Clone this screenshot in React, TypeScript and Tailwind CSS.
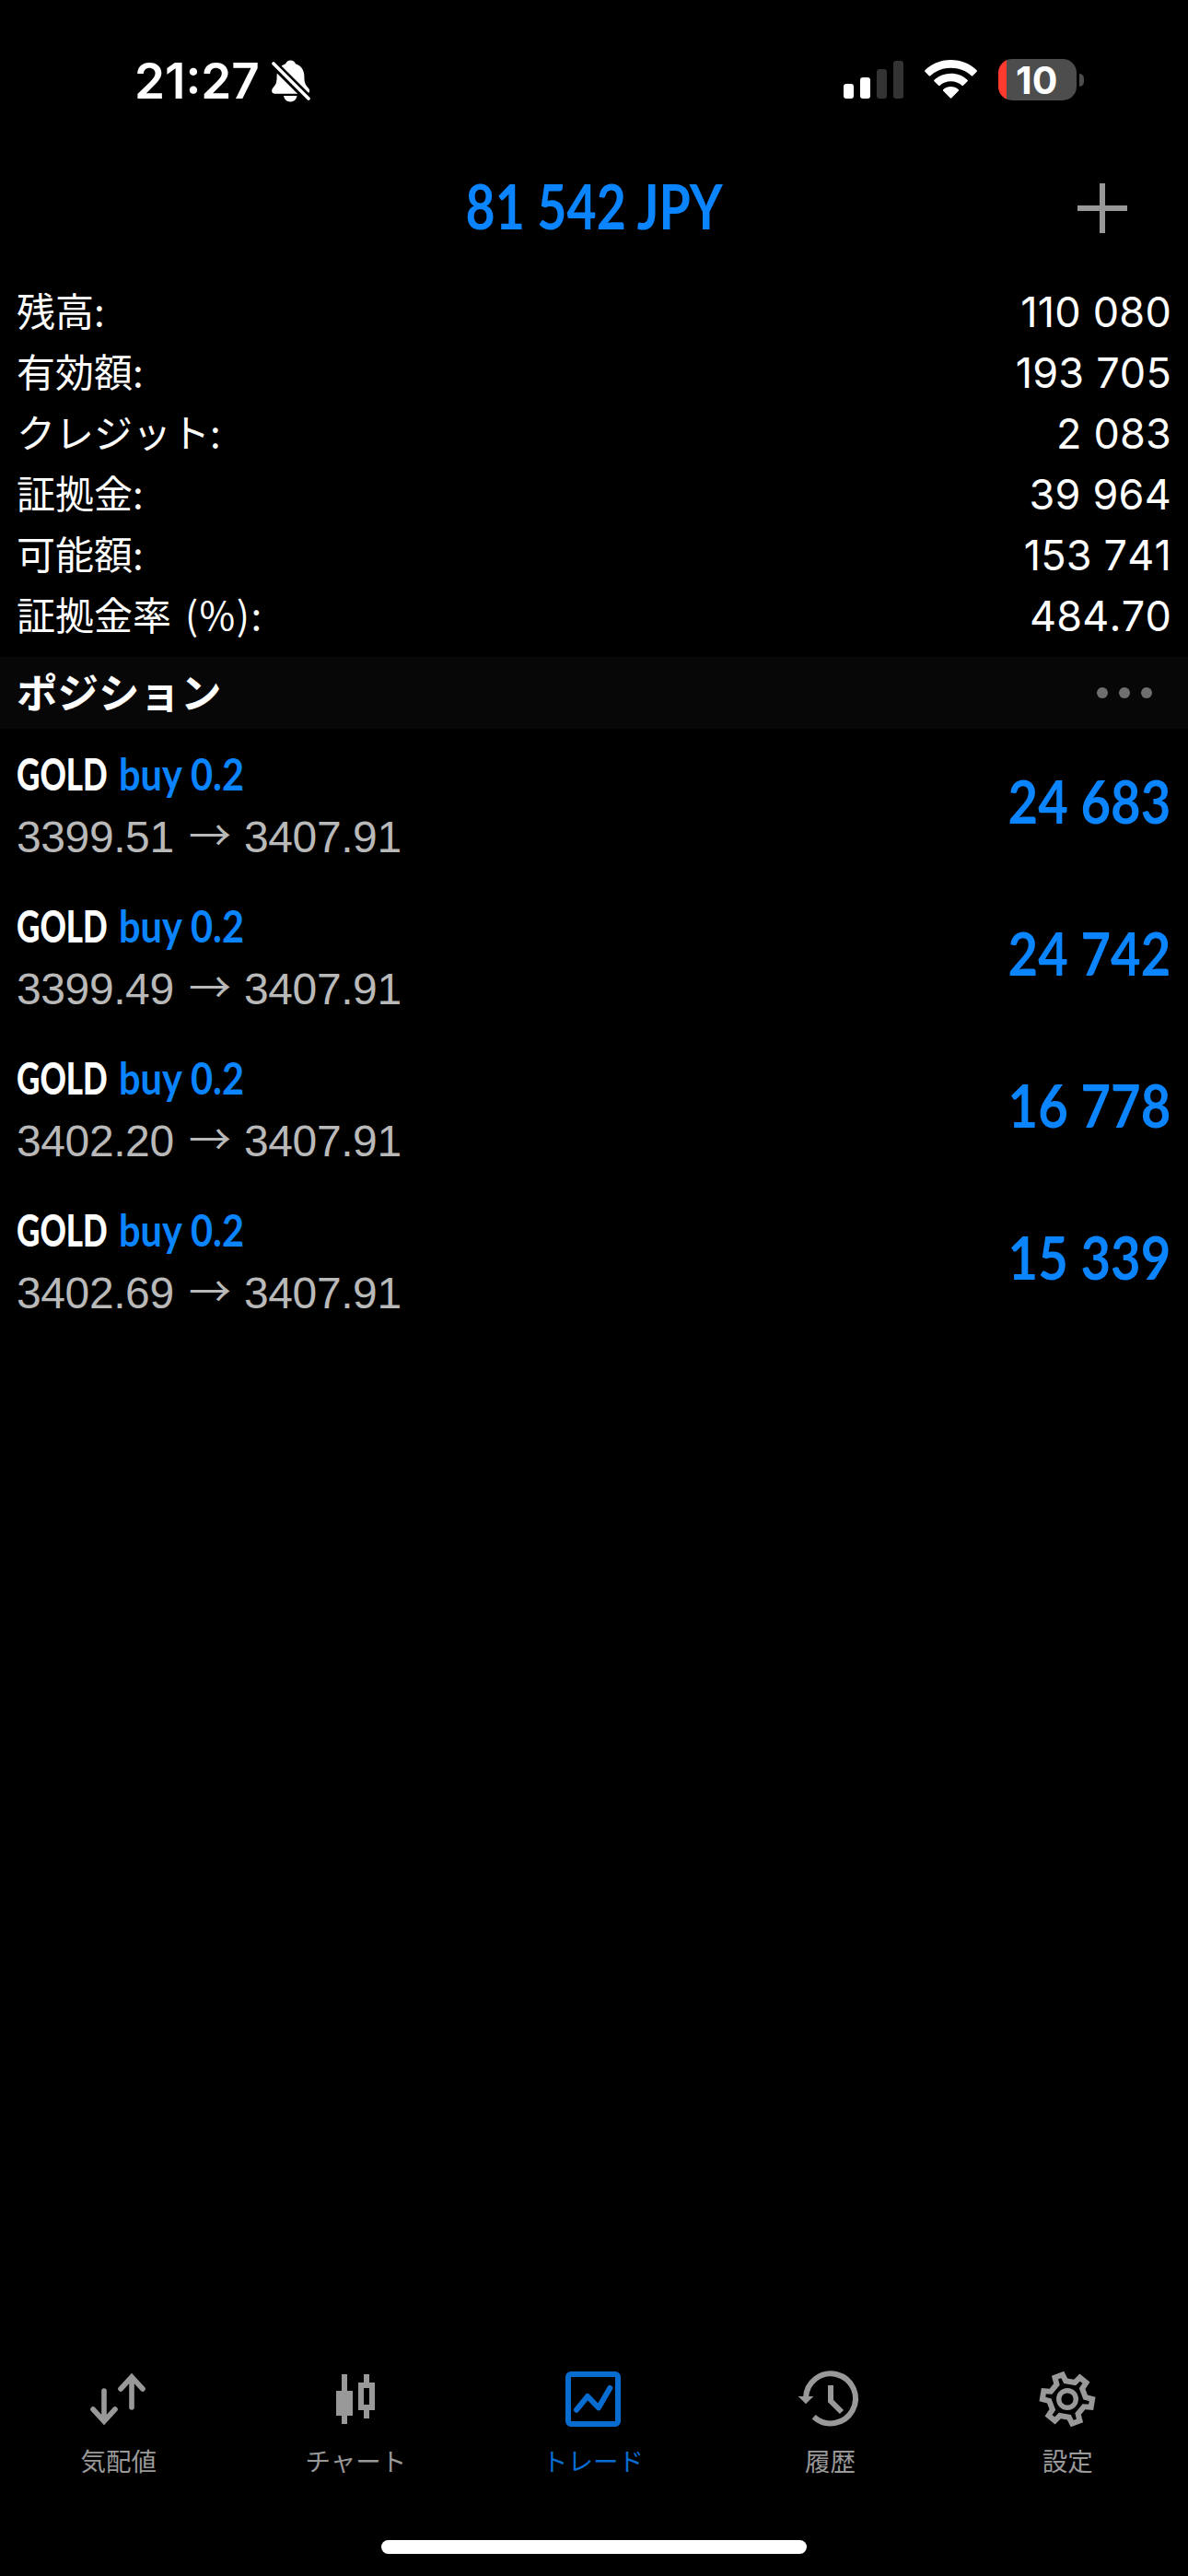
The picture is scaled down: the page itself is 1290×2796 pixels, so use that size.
import type { ReactNode } from "react";

interface Position {
  symbol: string;
  side: string;
  open: string;
  current: string;
  profit: string;
}

const summary = [
  { label: "残高:", value: "110 080" },
  { label: "有効額:", value: "193 705" },
  { label: "クレジット:", value: "2 083" },
  { label: "証拠金:", value: "39 964" },
  { label: "可能額:", value: "153 741" },
  { label: "証拠金率", unit: " (%):", value: "484.70" },
];

const positions: Position[] = [
  { symbol: "GOLD", side: "buy 0.2", open: "3399.51", current: "3407.91", profit: "24 683" },
  { symbol: "GOLD", side: "buy 0.2", open: "3399.49", current: "3407.91", profit: "24 742" },
  { symbol: "GOLD", side: "buy 0.2", open: "3402.20", current: "3407.91", profit: "16 778" },
  { symbol: "GOLD", side: "buy 0.2", open: "3402.69", current: "3407.91", profit: "15 339" },
];

// six-toothed cog, outer corners at r=30.6 and valleys at r=22.4
function gearPath() {
  const points: string[] = [];
  for (let i = 0; i < 6; i++) {
    const mid = 9.5 + i * 60;
    for (const [offset, r] of [[-21, 22.4], [-13.5, 30.6], [13.5, 30.6], [21, 22.4]]) {
      const a = ((mid + offset) * Math.PI) / 180;
      points.push(`${(30 + r * Math.cos(a)).toFixed(2)} ${(30 + r * Math.sin(a)).toFixed(2)}`);
    }
  }
  return `M${points.join("L")}Z`;
}

function TabIcon({ children }: { children: ReactNode }) {
  return (
    <svg
      viewBox="0 0 60 60"
      className="h-[60px] w-[60px] overflow-visible"
      fill="none"
      stroke="currentColor"
      strokeWidth="6"
    >
      {children}
    </svg>
  );
}

const tabs = [
  {
    label: "気配値",
    icon: (
      <TabIcon>
        <path
          d="M14 21v32M2 41l12 13.2L26 41M44 39V7M32 19L44 5.8 56 19"
          strokeLinecap="round"
          strokeWidth="5.6"
        />
      </TabIcon>
    ),
  },
  {
    label: "チャート",
    icon: (
      <TabIcon>
        <path
          stroke="none"
          fill="currentColor"
          fillRule="evenodd"
          d="M15 3h6v18h6v27h-6v9h-6v-9H9V21h6zM39 3h6v9h6v30h-6v9h-6v-9h-6V12h6zM39 18v18h6V18z"
        />
      </TabIcon>
    ),
  },
  {
    label: "トレード",
    active: true,
    icon: (
      <TabIcon>
        <rect x="3" y="3" width="54" height="54" rx="3" />
        <path d="M12 41.7L24 27l12 12.3L48.3 18" strokeLinecap="round" strokeLinejoin="round" />
      </TabIcon>
    ),
  },
  {
    label: "履歴",
    icon: (
      <TabIcon>
        <path d="M3 29A27 27 0 1 1 11.7 49.2" />
        <path d="M30 15v17l12 12" />
        <path d="M-5.3 27h16.6L3 35.3z" fill="currentColor" stroke="none" />
      </TabIcon>
    ),
  },
  {
    label: "設定",
    icon: (
      <TabIcon>
        <clipPath id="gear">
          <path d={gearPath()} />
        </clipPath>
        <path d={gearPath()} clipPath="url(#gear)" strokeWidth="12" />
        <circle cx="30" cy="30" r="9.3" strokeWidth="5.4" />
      </TabIcon>
    ),
  },
];

function StatusBar() {
  return (
    <div className="flex h-[150px] items-start pt-[60px] text-white">
      <div className="ml-[146px] h-[54px] w-[149px] font-['Inter',sans-serif] text-[53px] leading-[56px] font-semibold">
        21:27
      </div>
      <svg viewBox="0 0 42 46" className="mt-[5px] h-[46px] w-[42px]">
        <path
          d="M20.5 .5c-2.7 0-4.5 1.5-5.4 3.8-6 2-9.5 7-9.5 13.5 0 8-1.5 9.5-4.5 13-1.6 2-1.3 5.9 1.9 5.9h35c3.2 0 4-3.9 2-5.9-3.5-3.8-4.6-6-4.6-13 0-6.5-3.3-11.5-9.4-13.5-.9-2.3-2.8-3.8-5.5-3.8zM13 39h14.5c-.5 3.7-3.5 6.5-7.2 6.5S13.500 42.7 13 39z"
          fill="currentColor"
        />
        <path d="M2 4.5L40 42.2" stroke="#000" strokeWidth="9" />
        <path d="M2 4L40 42" stroke="currentColor" strokeWidth="3.6" strokeLinecap="round" />
      </svg>
      <div className="mt-[6px] ml-auto flex h-[41px] items-end gap-[7px]">
        <span className="h-[16px] w-[11px] rounded-[3px] bg-white" />
        <span className="h-[23px] w-[11px] rounded-[3px] bg-white" />
        <span className="h-[32px] w-[11px] rounded-[3px] bg-[#333]" />
        <span className="h-[41px] w-[11px] rounded-[3px] bg-[#333]" />
      </div>
      <svg viewBox="0 0 57 42" className="mt-[5px] ml-[23px] h-[42px] w-[57px]" fill="currentColor">
        <path d="M28.5 0C39.5 0 49.5 4.2 56.6 11.2q.8.8 0 1.6L52.3 17.2q-.8.8-1.6 0C45 11.8 37.2 8.8 28.5 8.8S12 11.8 6.3 17.2q-.8.8-1.6 0L.4 12.8q-.8-.8 0-1.6C7.5 4.2 17.5 0 28.5 0z" />
        <path d="M28.5 14.7c7 0 13.3 2.6 18 7q.8.8 0 1.6L42 27.7q-.8.8-1.6 0c-3.2-2.8-7.3-4.5-11.9-4.5s-8.7 1.7-11.9 4.5q-.8.8-1.6 0l-4.5-4.4q-.8-.8 0-1.6c4.7-4.4 11-7 18-7z" />
        <path d="M28.5 29c3.2 0 6 1.2 8.2 3.1q.8.8 0 1.6l-7.4 7.6q-.8.8-1.6 0l-7.4-7.6q-.8-.8 0-1.6c2.2-1.9 5-3.1 8.2-3.1z" />
      </svg>
      <div className="mt-[4px] mr-[113px] ml-[23px] flex items-center gap-[3px]">
        <div className="flex h-[45px] w-[85px] rounded-[15px] bg-linear-to-r from-[#ff3b30] from-[9px] to-[#4d4d4d] to-[9px]">
          <span className="pl-[19px] font-['Inter',sans-serif] text-[41px] leading-[46px] font-bold">10</span>
        </div>
        <span className="h-[14px] w-[5px] rounded-r-full bg-[#4d4d4d]" />
      </div>
    </div>
  );
}

function PositionRow({ symbol, side, open, current, profit }: Position) {
  return (
    <div className="flex h-[165px] items-start justify-between pr-[19px] pl-[18px]">
      <div className="pt-[18px]">
        <div className="flex h-[62px] font-['Lato',sans-serif] text-[48px] leading-[62px] font-bold whitespace-pre text-white">
          <span className="w-[111px] origin-left scale-x-[0.73] font-black">{symbol}</span>
          <span className="origin-left scale-x-[0.865] text-[#0a84ff]">{side}</span>
        </div>
        <div className="flex h-[74px] font-['Liberation_Sans',sans-serif] text-[48px] leading-[75px] tracking-[-0.4px] text-[#b9b9b9]">
          <span className="w-[187px]">{open}</span>
          <span className="w-[60px] font-['Noto_Sans_CJK_JP',sans-serif] text-[46px] leading-[65px]">→</span>
          <span>{current}</span>
        </div>
      </div>
      <div className="origin-right scale-x-[0.865] pt-[40px] font-['Lato',sans-serif] text-[65px] leading-[76px] font-bold text-[#0a84ff]">
        {profit}
      </div>
    </div>
  );
}

export default function App() {
  return (
    <div className="flex h-[2796px] w-[1290px] flex-col overflow-hidden bg-black">
      <StatusBar />

      <header className="flex h-[155px] items-start justify-between">
        <div className="w-[200px]" />
        <h1 className="scale-x-[0.84] pt-[36px] font-['Lato',sans-serif] text-[66px] leading-[76px] font-bold text-[#0a84ff]">
          81 542 JPY
        </h1>
        <div className="flex w-[200px] justify-end pt-[49px] pr-[66px]">
          <svg viewBox="0 0 54 54" className="h-[54px] w-[54px]" stroke="#999" strokeWidth="6">
            <path d="M27 0v54M0 27h54" />
          </svg>
        </div>
      </header>

      <section className="h-[408px] px-[18px] text-white">
        {summary.map(({ label, unit, value }) => (
          <div key={label} className="flex h-[66px] items-start justify-between">
            <span className="font-['Noto_Sans_CJK_JP',sans-serif] text-[42px] leading-[62px] whitespace-pre">
              {label}
              {unit && <span className="tracking-[1.5px] [word-spacing:4px]">{unit}</span>}
            </span>
            <span className="font-['Inter',sans-serif] text-[45px] leading-[67px] tracking-[0.2px] [font-kerning:none]">
              {value}
            </span>
          </div>
        ))}
      </section>

      <div className="flex h-[78px] items-start justify-between bg-[#070707] pr-[39px] pl-[18px]">
        <h2 className="font-['Noto_Sans_CJK_JP',sans-serif] text-[44.5px] leading-[74px] font-bold text-white">
          ポジション
        </h2>
        <div className="flex gap-[12px] pt-[33px]">
          <span className="size-3 rounded-full bg-[#6f6f6f]" />
          <span className="size-3 rounded-full bg-[#6f6f6f]" />
          <span className="size-3 rounded-full bg-[#6f6f6f]" />
        </div>
      </div>

      <main className="flex-1">
        {positions.map((position) => (
          <PositionRow key={position.open} {...position} />
        ))}
      </main>

      <nav className="flex h-[183px] w-[1288px]">
        {tabs.map(({ label, icon, active }) => (
          <div
            key={label}
            className={`flex flex-1 flex-col items-center ${active ? "text-[#086cd1]" : "text-[#999]"}`}
          >
            {icon}
            <span className="mt-[16px] font-['Noto_Sans_CJK_JP',sans-serif] text-[27.5px] leading-[40px]">
              {label}
            </span>
          </div>
        ))}
      </nav>
      <div className="flex h-[39px] justify-center">
        <div className="h-[15px] w-[462px] rounded-full bg-white" />
      </div>
    </div>
  );
}
